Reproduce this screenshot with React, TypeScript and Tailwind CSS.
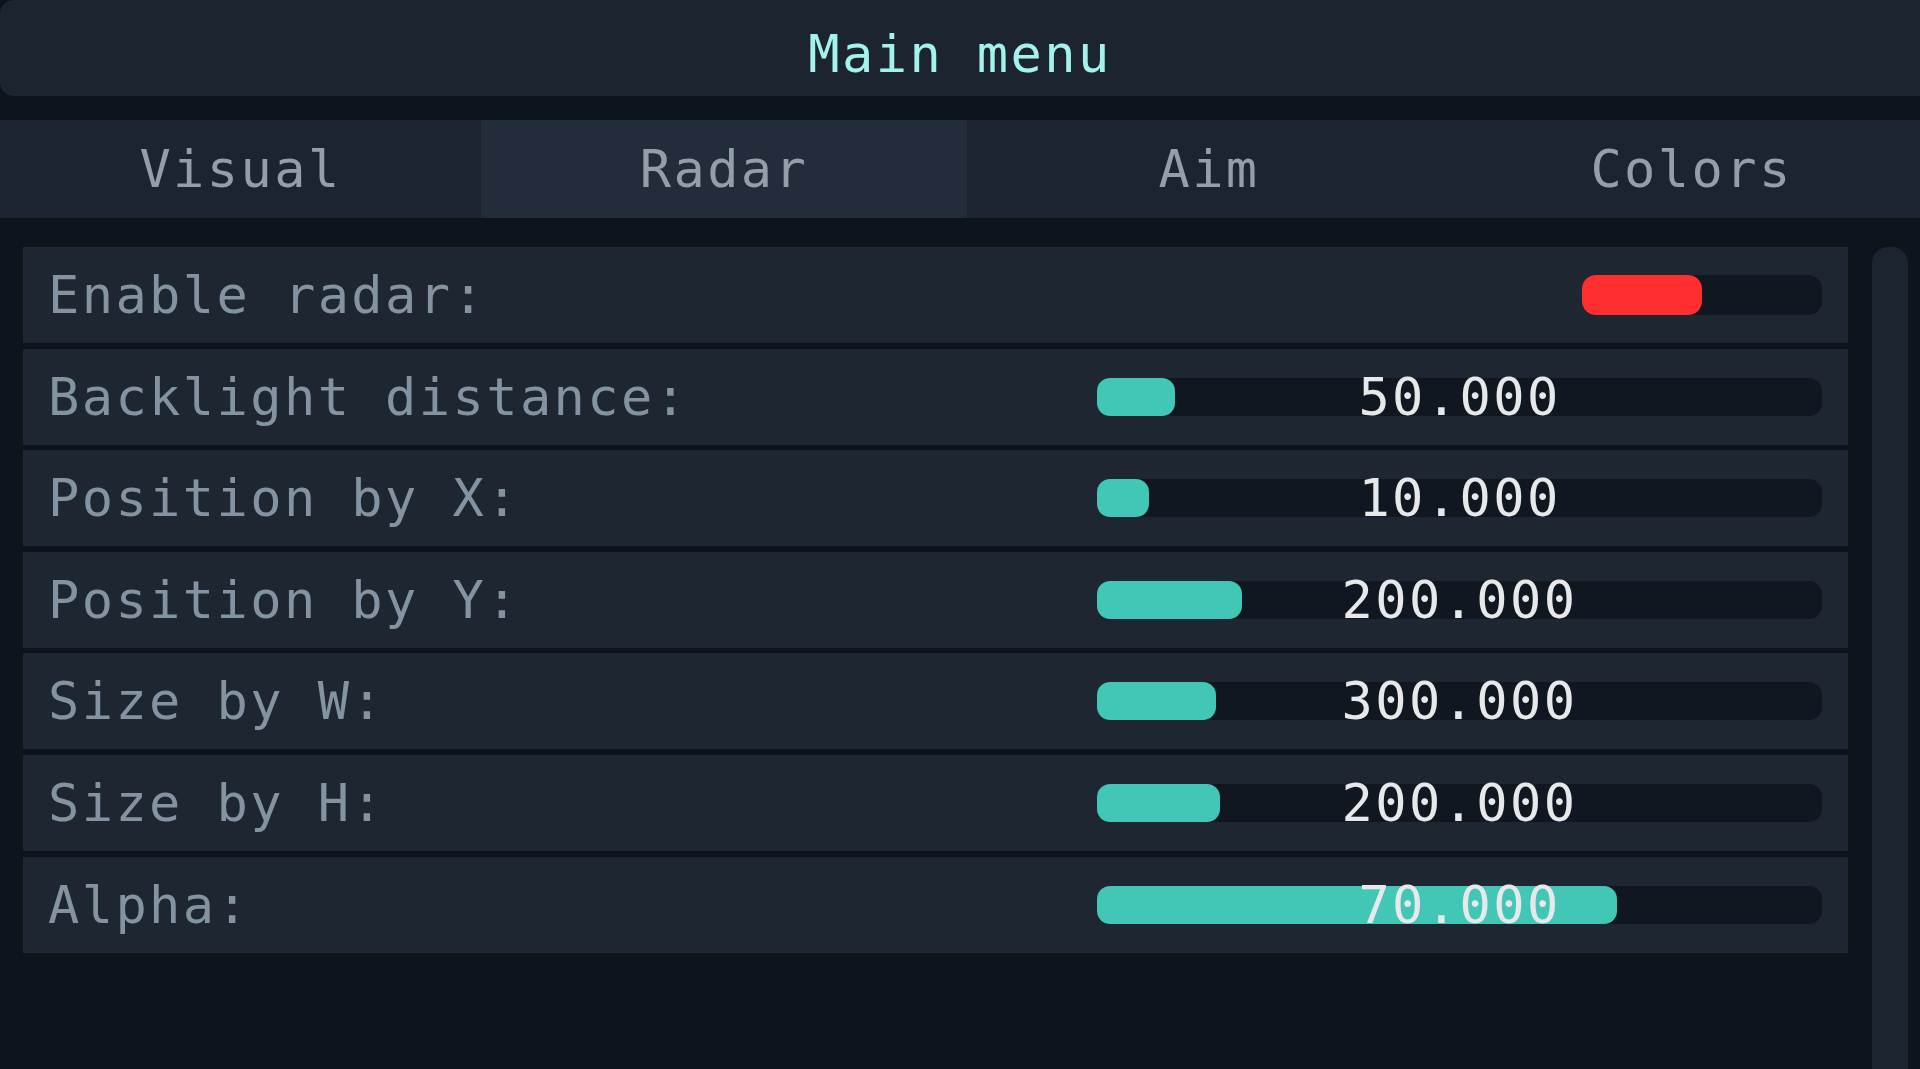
import React from 'react';

const font = { fontFamily: '"DejaVu Sans Mono", "Liberation Mono", monospace' };

const tabs = [
    { name: 'Visual', w: 'w-[481px]' },
    { name: 'Radar', w: 'w-[486px]' },
    { name: 'Aim', w: 'w-[484px]' },
    { name: 'Colors', w: 'w-[481px]' },
];

const sliders = [
    { label: 'Backlight distance:', value: '50.000', fill: 78 },
    { label: 'Position by X:', value: '10.000', fill: 52 },
    { label: 'Position by Y:', value: '200.000', fill: 145 },
    { label: 'Size by W:', value: '300.000', fill: 119 },
    { label: 'Size by H:', value: '200.000', fill: 123 },
    { label: 'Alpha:', value: '70.000', fill: 520 },
];

function Row({ label, children }: { label: string, children: React.ReactNode }) {
    return (
        <div className="h-[96px] bg-[#1e2632] flex items-center justify-between pl-[25px] pr-[26px]">
            <span className="text-[52px] leading-none tracking-[2.4px] text-[#8393a1]">{label}</span>
            {children}
        </div>
    );
}

export default function App() {
    return (
        <div className="w-[1920px] h-[1069px] bg-[#0e141c] overflow-hidden flex flex-col" style={font}>
            {/* title bar */}
            <div className="h-[96px] shrink-0 bg-[#1c2430] rounded-l-[14px] flex items-center justify-center pt-[12px]">
                <span className="text-[52px] leading-none tracking-[2.4px] text-[#a4f2ee]">Main menu</span>
            </div>

            {/* tabs */}
            <div className="mt-[24px] h-[98px] shrink-0 flex bg-[#1c2431]">
                {tabs.map((t) => (
                    <div
                        key={t.name}
                        className={`${t.w} shrink-0 flex items-center justify-center ${t.name === 'Radar' ? 'bg-[#222c3a]' : ''}`}
                    >
                        <span className="text-[52px] leading-none tracking-[2.4px] text-[#939eaa]">{t.name}</span>
                    </div>
                ))}
            </div>

            {/* content */}
            <div className="flex-1 flex pt-[29px] pl-[23px] gap-[24px]">
                <div className="w-[1825px] flex flex-col gap-[5.6px]">
                    <Row label="Enable radar:">
                        <div className="w-[240px] h-[40px] rounded-[14px] bg-[#111720] flex">
                            <div className="w-[120px] h-full rounded-[14px] bg-[#ff2f2f]" />
                        </div>
                    </Row>
                    {sliders.map((s) => (
                        <Row key={s.label} label={s.label}>
                            <div className="relative w-[725px] h-[38px] rounded-[13px] bg-[#111720]">
                                <div className="h-full rounded-[13px] bg-[#42c6b6]" style={{ width: s.fill }} />
                                <div className="absolute inset-0 flex items-center justify-center">
                                    <span className="text-[52px] leading-none tracking-[2.4px] text-[#e6e8ea]">{s.value}</span>
                                </div>
                            </div>
                        </Row>
                    ))}
                </div>
                {/* scrollbar */}
                <div className="w-[36px] bg-[#1c2430] rounded-t-[16px]" />
            </div>
        </div>
    );
}
